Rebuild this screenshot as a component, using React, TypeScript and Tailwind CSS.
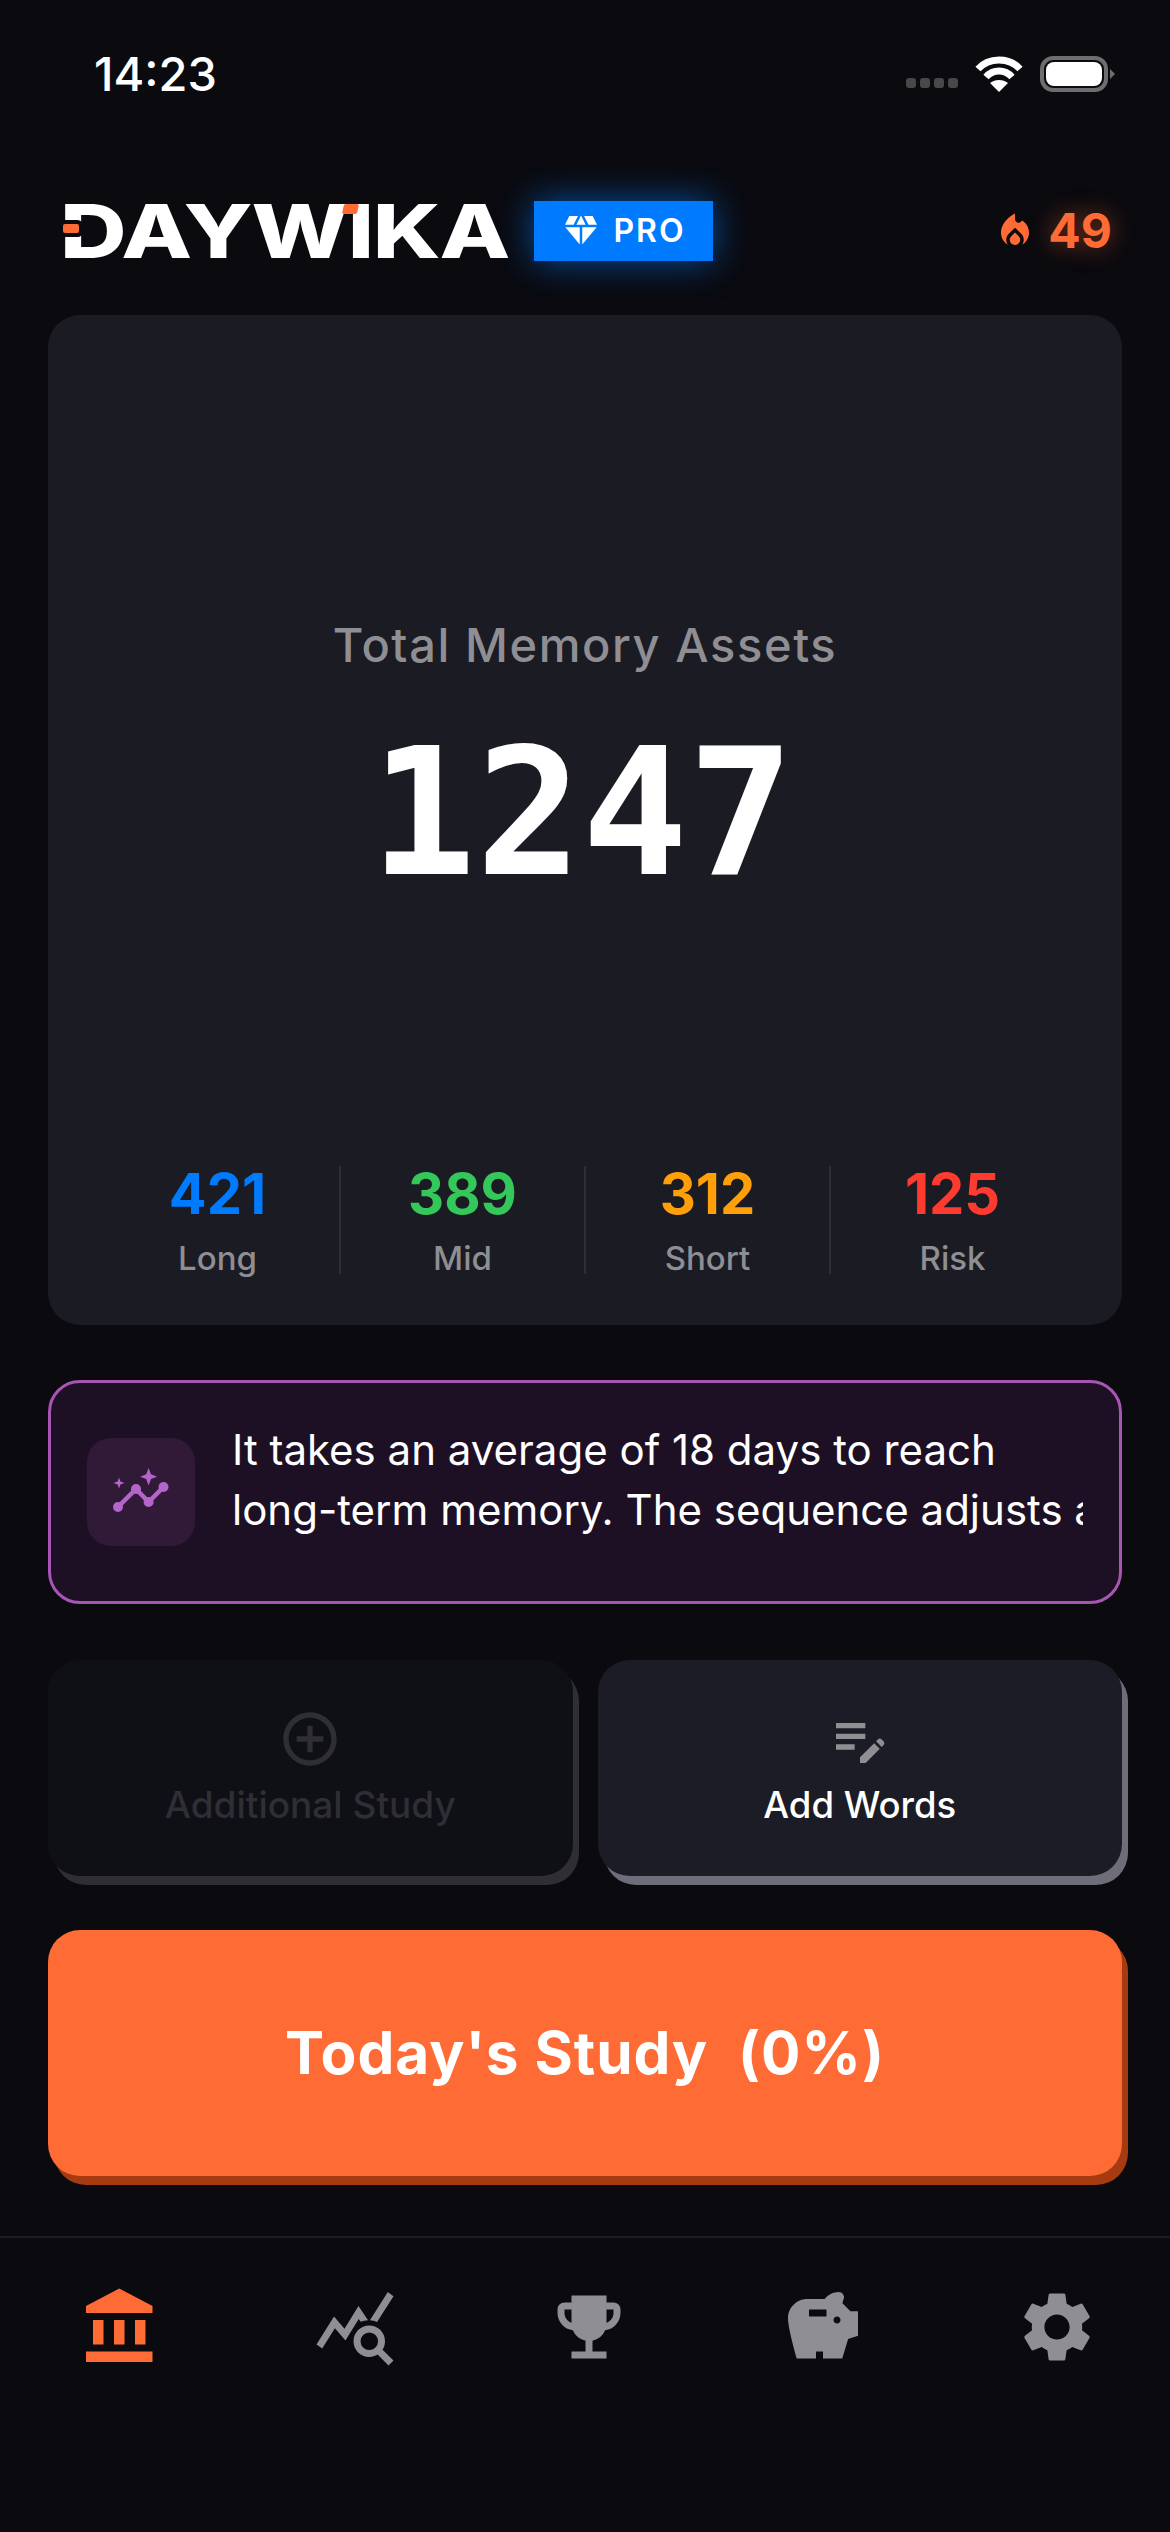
import React from "react";
import { MdQueryStats, MdEmojiEvents, MdSavings, MdSettings, MdDiamond, MdLocalFireDepartment, MdAddCircleOutline, MdEditNote } from "react-icons/md";

const inter = "font-['Inter','Liberation_Sans',sans-serif]";

function BankIcon() {
  return (
    <svg width="84" height="84" viewBox="0 0 24 24" fill="#ff6b35">
      <path d="M4 10v7h3v-7H4zm6 0v7h3v-7h-3zM2 22h19v-3H2v3zm14-12v7h3v-7h-3zM11.5 1L2 6v2h19V6l-9.5-5z" />
    </svg>
  );
}

function InsightIcon() {
  return (
    <svg width="108" height="108" viewBox="0 0 108 108" fill="#b565c9" stroke="none">
      <path d="M61.6 30 L64 36.3 L70 38.7 L64 41 L61.6 47.4 L59.2 41 L53.2 38.7 L59.2 36.3 Z" />
      <path d="M32 39.5 L33.4 43.6 L37.5 45 L33.4 46.4 L32 50.5 L30.6 46.4 L26.5 45 L30.6 43.6 Z" />
      <polyline points="31,69 49,51 61.6,64 76.5,49" fill="none" stroke="#b565c9" strokeWidth="4.5" />
      <circle cx="31" cy="69" r="5" />
      <circle cx="49" cy="51" r="5" />
      <circle cx="61.6" cy="64" r="5" />
      <circle cx="76.5" cy="49" r="5" />
    </svg>
  );
}

function StatusBar() {
  return (
    <div className="flex h-[100px] items-end justify-between pl-[94px] pr-[55px]">
      <span className="text-[47px] font-medium leading-[52px] text-white">14:23</span>
      <div className="flex h-[52px] items-center gap-[17px]">
        <div className="flex gap-[4px] pt-[18px]">
          <span className="h-[10px] w-[10px] rounded-[3px] bg-[#48484a]" />
          <span className="h-[10px] w-[10px] rounded-[3px] bg-[#48484a]" />
          <span className="h-[10px] w-[10px] rounded-[3px] bg-[#48484a]" />
          <span className="h-[10px] w-[10px] rounded-[3px] bg-[#48484a]" />
        </div>
        <svg width="48" height="36" viewBox="0 0 48 36" fill="none" stroke="white" strokeWidth="7">
          <path d="M3 13 C14 1 34 1 45 13" />
          <path d="M11 21 C18 13 30 13 37 21" />
          <path d="M24 36 L15 27 C20 23 28 23 33 27 Z" fill="white" stroke="none" />
        </svg>
        <svg width="75" height="36" viewBox="0 0 75 36">
          <rect x="2" y="2" width="64" height="32" rx="11" fill="none" stroke="#6e6e70" strokeWidth="4" />
          <rect x="6" y="6" width="56" height="24" rx="8" fill="white" />
          <path d="M70 13 L75 18 L70 23 Z" fill="#6e6e70" />
        </svg>
      </div>
    </div>
  );
}

function Header() {
  return (
    <div className="flex h-[215px] items-start justify-between pl-[63px] pr-[58px] pt-[101px]">
      <div className="flex items-center gap-[27px]">
        <div className="relative h-[60px] w-[444px]">
          <span className="absolute left-[-3px] top-[-11px] origin-left scale-x-[1.245] whitespace-nowrap text-[74px] font-extrabold leading-[82px] tracking-[-1px] text-white">DAYWIKA</span>
          <span className="absolute left-0 top-[23px] h-[9px] w-[16px] rounded-[2px] bg-[#ff6b35] ring-[4px] ring-[#0a0a0f]" />
          <span className="absolute left-[280px] top-[3px] h-[10px] w-[15px] -skew-x-12 rounded-[2px] bg-[#ff6b35]" />
        </div>
        <div className="flex h-[60px] w-[179px] items-center justify-center gap-[12px] bg-[#007aff] shadow-[0_0_36px_#007affa0]">
          <MdDiamond size={40} color="white" />
          <span className="text-[32px] font-semibold leading-none tracking-[2px] text-white">PRO</span>
        </div>
      </div>
      <div className="flex h-[60px] items-center gap-[12px] text-[#ff6b35] [text-shadow:0_0_24px_#ff6b3580]">
        <MdLocalFireDepartment size={42} />
        <span className="text-[48px] font-bold leading-none">49</span>
      </div>
    </div>
  );
}

function Stat({ value, label, color, last }: { value: string; label: string; color: string; last?: boolean }) {
  return (
    <div className={`flex h-[108px] flex-1 flex-col items-center justify-start ${last ? "" : "border-r-2 border-[#2c2d36]"}`}>
      <span className={`text-[56px] font-bold leading-[56px] ${color}`}>{value}</span>
      <span className="mt-[16px] text-[33px] font-medium leading-[40px] text-[#8e8e93]">{label}</span>
    </div>
  );
}

function TotalCard() {
  return (
    <div className="flex h-[1010px] flex-col items-center rounded-[32px] bg-[#1a1b23] px-[48px]">
      <div className="mt-[300px] text-[47px] font-medium leading-[60px] tracking-[1.6px] text-[#8e8e93]">Total Memory Assets</div>
      <div className="mt-[34px] pr-[6px] font-['DejaVu_Sans_Mono',monospace] text-[176px] font-bold leading-[210px] text-white">1247</div>
      <div className="mt-[247px] flex w-full">
        <Stat value="421" label="Long" color="text-[#007aff]" />
        <Stat value="389" label="Mid" color="text-[#34c759]" />
        <Stat value="312" label="Short" color="text-[#ff9f0a]" />
        <Stat value="125" label="Risk" color="text-[#ff3b30]" last />
      </div>
    </div>
  );
}

function Insight() {
  return (
    <div className="mt-[55px] flex h-[224px] items-center gap-[37px] rounded-[32px] border-[3px] border-[#a855b5] bg-[#1e1024] px-[36px]">
      <div className="flex h-[108px] w-[108px] shrink-0 items-center justify-center rounded-[24px] bg-[#301a38]">
        <InsightIcon />
      </div>
      <div className="min-w-0 flex-1 overflow-hidden whitespace-nowrap pb-[24px] text-[42px] font-normal leading-[60px] text-white">
        <div>It takes an average of 18 days to reach</div>
        <div>long-term memory. The sequence adjusts automatically</div>
      </div>
    </div>
  );
}

function Actions() {
  return (
    <div className="mt-[56px] flex gap-[25px]">
      <div className="flex h-[216px] flex-1 flex-col items-center justify-center rounded-[32px] bg-[#0f1015] shadow-[6px_9px_0_#2e2e34]">
        <MdAddCircleOutline size={64} color="#2e2e34" />
        <span className="mt-[10px] text-[37px] font-medium leading-[48px] text-[#2e2e34]">Additional Study</span>
      </div>
      <div className="flex h-[216px] flex-1 flex-col items-center justify-center rounded-[32px] bg-[#1b1c25] shadow-[6px_9px_0_#6e6e7a]">
        <MdEditNote size={64} color="#8e8e93" />
        <span className="mt-[10px] text-[36.5px] font-medium leading-[48px] text-white">Add Words</span>
      </div>
    </div>
  );
}

function Primary() {
  return (
    <div className="mt-[54px] flex h-[246px] items-center justify-center rounded-[32px] bg-[#ff6b35] shadow-[6px_9px_0_#a63a10]">
      <span className="whitespace-pre text-[58.5px] font-bold leading-[72px] tracking-[1px] text-white">{"Today's Study  (0%)"}</span>
    </div>
  );
}

function TabBar() {
  return (
    <div className="mt-[60px] flex border-t-2 border-[#1a1b23] pl-[4px] pt-[47px]">
      <div className="flex w-[234px] shrink-0 justify-center"><BankIcon /></div>
      <div className="flex w-[234px] shrink-0 justify-center"><MdQueryStats size={84} color="#8e8e93" /></div>
      <div className="flex w-[234px] shrink-0 justify-center"><MdEmojiEvents size={84} color="#8e8e93" /></div>
      <div className="flex w-[234px] shrink-0 justify-center"><MdSavings size={84} color="#8e8e93" /></div>
      <div className="flex w-[234px] shrink-0 justify-center"><MdSettings size={84} color="#8e8e93" /></div>
    </div>
  );
}

export default function App() {
  return (
    <div className={`h-[2532px] w-[1170px] overflow-hidden bg-[#0a0a0f] ${inter}`}>
      <StatusBar />
      <Header />
      <div className="px-[48px]">
        <TotalCard />
        <Insight />
        <Actions />
        <Primary />
      </div>
      <TabBar />
    </div>
  );
}
